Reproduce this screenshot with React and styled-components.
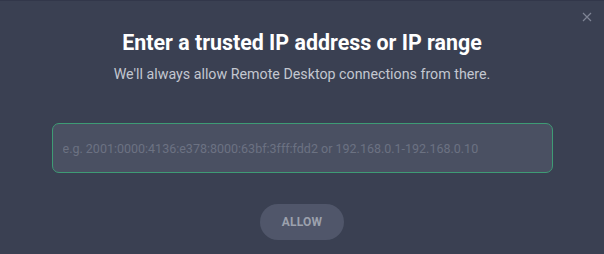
import styled, { createGlobalStyle } from "styled-components";

const Global = createGlobalStyle`
	html, body {
		margin: 0;
		padding: 0;
		background: #3a4052;
	}
	body {
		font-family: Roboto, "Liberation Sans", sans-serif;
	}
`;

const Dialog = styled.div`
	position: relative;
	box-sizing: border-box;
	width: 604px;
	height: 254px;
	background: #3a4052;
	border-top: 1px solid #32374a;
	display: flex;
	flex-direction: column;
	align-items: center;
	padding-top: 28px;
`;

const Close = styled.button`
	position: absolute;
	top: 10px;
	right: 11px;
	width: 12px;
	height: 12px;
	padding: 0;
	border: none;
	background: none;
	color: #7e8494;
	cursor: pointer;
	display: flex;
`;

const Title = styled.h1`
	margin: 0;
	font-size: 21.4px;
	line-height: 28px;
	font-weight: 700;
	color: #ffffff;
`;

const Subtitle = styled.p`
	margin: 8px 0 0;
	font-size: 14.25px;
	line-height: 18px;
	color: #c3c7d0;
`;

const Input = styled.input`
	box-sizing: border-box;
	margin-top: 40px;
	width: 501px;
	height: 50px;
	padding: 0 10px;
	border: 1px solid #3e9b75;
	border-radius: 7px;
	background: #4a5062;
	font-family: inherit;
	font-size: 12.5px;
	color: #fff;
	outline: none;
	&::placeholder {
		color: #6c7282;
	}
`;

const Button = styled.button`
	margin-top: 31px;
	width: 84px;
	height: 36px;
	border: none;
	border-radius: 18px;
	background: #50566a;
	color: #9ca1ad;
	font-family: inherit;
	font-size: 12px;
	font-weight: 700;
	letter-spacing: 0.2px;
	cursor: pointer;
`;

export default function App() {
	return (
		<>
			<Global />
			<Dialog>
				<Close aria-label='Close'>
					<svg width='12' height='12' viewBox='0 0 12 12'>
						<path d='M2 2L10 10M10 2L2 10' stroke='currentColor' strokeWidth='1.2' />
					</svg>
				</Close>
				<Title>Enter a trusted IP address or IP range</Title>
				<Subtitle>We'll always allow Remote Desktop connections from there.</Subtitle>
				<Input placeholder='e.g. 2001:0000:4136:e378:8000:63bf:3fff:fdd2 or 192.168.0.1-192.168.0.10' />
				<Button>ALLOW</Button>
			</Dialog>
		</>
	);
}
